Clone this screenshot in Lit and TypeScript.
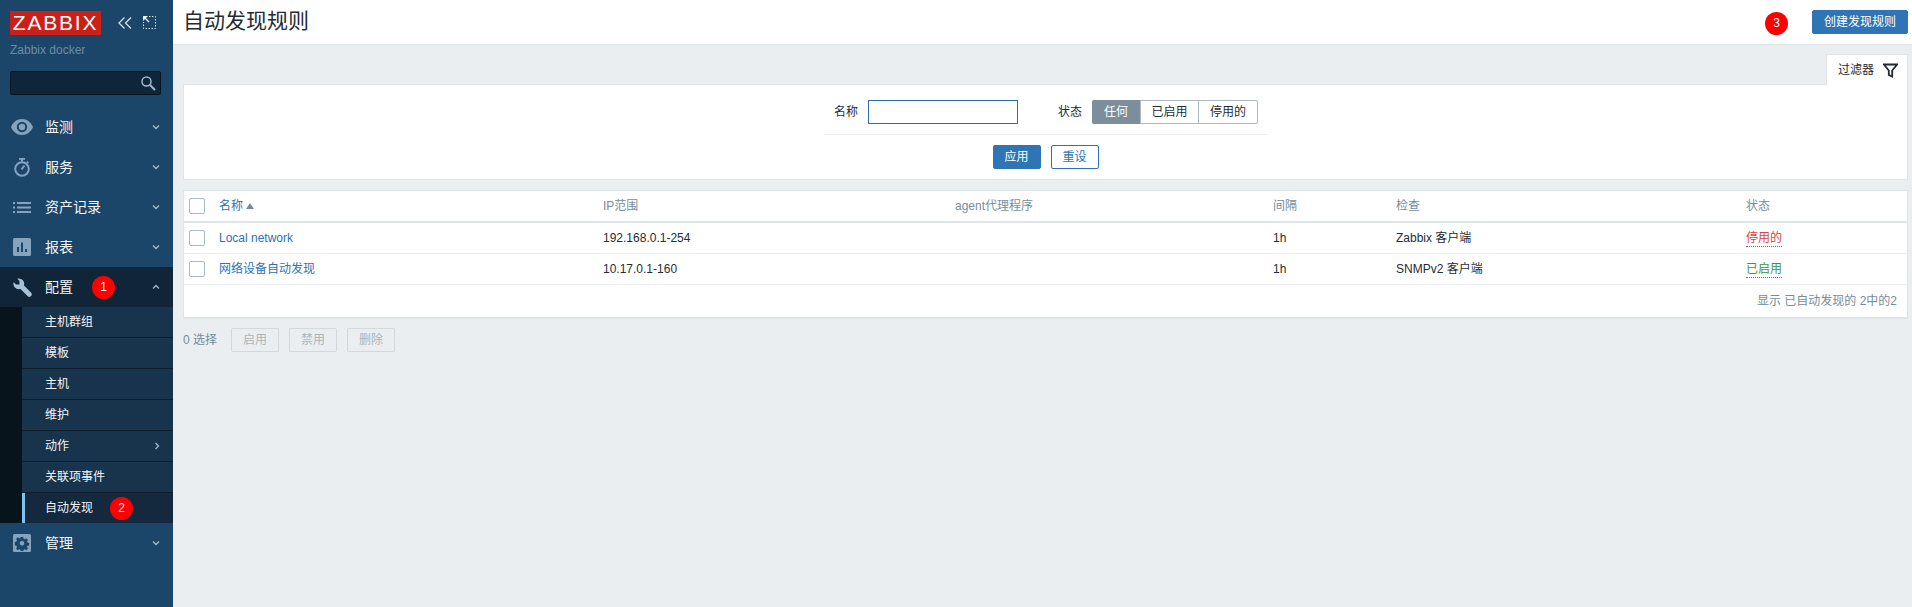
import { LitElement, html, css, svg } from 'lit';
import { customElement } from 'lit/decorators.js';

const chevronDown = svg`<polyline points="1,1.5 4,4.5 7,1.5" fill="none" stroke="currentColor" stroke-width="1.3" />`;
const chevronUp = svg`<polyline points="1,4.5 4,1.5 7,4.5" fill="none" stroke="currentColor" stroke-width="1.3" />`;

const menuIcons = {
  eye: svg`<svg width="22" height="16" viewBox="0 0 22 16"><path fill-rule="evenodd" fill="#86a3bd" d="M11 0C6 0 2 3.500 0 8c2 4.500 6 8 11 8s9-3.500 11-8c-2-4.500-6-8-11-8zm0 2.800a5.200 5.200 0 1 1 0 10.400 5.200 5.200 0 0 1 0-10.400z"/><circle cx="11" cy="8" r="3.200" fill="#86a3bd"/></svg>`,
  timer: svg`<svg width="16" height="19" viewBox="0 0 16 19"><rect x="5" y="0" width="6" height="1.800" fill="#86a3bd"/><rect x="7" y="1" width="2" height="2.500" fill="#86a3bd"/><circle cx="8" cy="11" r="6.800" fill="none" stroke="#86a3bd" stroke-width="2"/><path d="M7.500 11.500l3-4" stroke="#86a3bd" stroke-width="2"/><path d="M12.800 3.500l1.700 1.700" stroke="#86a3bd" stroke-width="1.600"/></svg>`,
  list: svg`<svg width="18" height="11" viewBox="0 0 18 11" fill="#86a3bd"><rect x="0" y="0" width="2" height="2"/><rect x="4" y="0" width="14" height="2"/><rect x="0" y="4.500" width="2" height="2"/><rect x="4" y="4.500" width="14" height="2"/><rect x="0" y="9" width="2" height="2"/><rect x="4" y="9" width="14" height="2"/></svg>`,
  bars: svg`<svg width="18" height="18" viewBox="0 0 18 18"><rect width="18" height="18" rx="1.500" fill="#86a3bd"/><rect x="4" y="9" width="2" height="5" fill="#1c4669"/><rect x="8" y="4.500" width="2" height="9.500" fill="#1c4669"/><rect x="12" y="11" width="2" height="3" fill="#1c4669"/></svg>`,
  wrench: svg`<svg width="19" height="19" viewBox="0 0 19 19"><g fill="#a9c1d6"><circle cx="5.800" cy="5.800" r="5.400"/><path d="M4 7.500L7.500 4 18 14.500a2.400 2.400 0 0 1-3.500 3.500z"/></g><path fill="#102537" d="M-1 2.500L2.500 -1 6.500 3 6.500 6.500 3 6.500z"/></svg>`,
  gear: svg`<svg width="18" height="18" viewBox="0 0 18 18"><rect width="18" height="18" rx="1.500" fill="#86a3bd"/><path fill="#1c4669" fill-rule="evenodd" d="M7.700 3h2.600l.3 1.700 1.200.5 1.400-1 1.800 1.800-1 1.400.5 1.200 1.700.3v2.600l-1.700.3-.5 1.200 1 1.400-1.800 1.800-1.400-1-1.200.5-.3 1.300H7.700l-.3-1.300-1.200-.5-1.400 1-1.800-1.800 1-1.400-.5-1.200-1.700-.3V7.900l1.700-.3.500-1.200-1-1.400 1.800-1.800 1.400 1 1.200-.5zM9 7a2.300 2.300 0 1 0 0 4.600A2.300 2.300 0 0 0 9 7z"/></svg>`,
};

const mainMenu = [
  { label: '监测', icon: menuIcons.eye },
  { label: '服务', icon: menuIcons.timer },
  { label: '资产记录', icon: menuIcons.list },
  { label: '报表', icon: menuIcons.bars },
];

const subMenu = ['主机群组', '模板', '主机', '维护', '动作', '关联项事件', '自动发现'];

const rows = [
  { name: 'Local network', range: '192.168.0.1-254', interval: '1h', check: 'Zabbix 客户端', status: '停用的', cls: 'off' },
  { name: '网络设备自动发现', range: '10.17.0.1-160', interval: '1h', check: 'SNMPv2 客户端', status: '已启用', cls: 'on' },
];

@customElement('app-root')
export class AppRoot extends LitElement {
  static styles = css`
    :host {
      display: flex;
      height: 607px;
      overflow: hidden;
      background: #ebeef0;
      color: #1f2c33;
      font: 12px/14px "Liberation Sans", "Noto Sans CJK SC", sans-serif;
    }

    /* sidebar */
    .side {
      width: 173px;
      flex: none;
      background: #1c4669;
      display: flex;
      flex-direction: column;
    }
    .brand {
      display: flex;
      align-items: flex-start;
      padding: 11px 0 0 10px;
    }
    .logo {
      width: 91px;
      height: 24px;
      background: #c9201a;
      color: #fff;
      font-size: 21px;
      line-height: 24px;
      text-align: center;
      letter-spacing: 1.8px;
    }
    .brand-tools {
      display: flex;
      align-items: center;
      gap: 11px;
      margin: 5px 0 0 17px;
    }
    .server {
      color: #6c8ba6;
      margin: 8px 0 0 10px;
      height: 14px;
    }
    .search {
      margin: 14px 0 12px 10px;
      width: 151px;
      height: 24px;
      box-sizing: border-box;
      background: #0f2638;
      border: 1px solid #07141f;
      border-radius: 2px;
      display: flex;
      align-items: center;
      justify-content: flex-end;
      padding-right: 4px;
    }
    .item {
      height: 40px;
      display: flex;
      align-items: center;
      color: #f2f5f8;
      font-size: 14px;
      position: relative;
      flex: none;
    }
    .item .ico {
      width: 45px;
      flex: none;
      display: flex;
      justify-content: center;
      padding-right: 1px;
      box-sizing: border-box;
    }
    .item .chev {
      margin-left: auto;
      margin-right: 13px;
      color: #a4b8c9;
      display: flex;
    }
    .item.open {
      background: #102537;
    }
    .badge {
      width: 23px;
      height: 23px;
      border-radius: 50%;
      background: #ff0000;
      color: #fff;
      font-size: 12px;
      line-height: 23px;
      text-align: center;
      flex: none;
    }
    .item .badge {
      margin-left: 19px;
    }
    .sub {
      display: flex;
      background: #07141c;
      padding-left: 22px;
    }
    .sub ul {
      flex: 1;
      list-style: none;
      margin: 0;
      padding: 0;
    }
    .sub li {
      height: 31px;
      box-sizing: border-box;
      border-bottom: 1px solid #0d1d2b;
      background: #18344c;
      color: #f2f5f8;
      display: flex;
      align-items: center;
      padding-left: 23px;
    }
    .sub li:last-child {
      height: 30px;
      border-bottom: 0;
      border-left: 3px solid #7fc2f2;
      padding-left: 20px;
      background: #14293d;
    }
    .sub li .badge {
      margin-left: 17px;
    }
    .sub li .chev {
      margin-left: auto;
      margin-right: 13px;
      color: #a4b8c9;
      display: flex;
    }

    /* main */
    .main {
      flex: 1;
      min-width: 0;
      display: flex;
      flex-direction: column;
    }
    .head {
      height: 45px;
      box-sizing: border-box;
      background: #fff;
      border-bottom: 1px solid #dfe4e7;
      display: flex;
      align-items: center;
      padding: 0 4px 0 10px;
      flex: none;
    }
    h1 {
      margin: 0;
      font-size: 21px;
      line-height: 24px;
      font-weight: 400;
      color: #1f2c33;
      margin-top: -3px;
    }
    .head .badge {
      margin: 2px 24px 0 auto;
    }
    .btn {
      height: 24px;
      box-sizing: border-box;
      border: 1px solid #2b72b8;
      border-radius: 2px;
      background: #fff;
      color: #2b72b8;
      font: inherit;
      padding: 0;
      display: flex;
      align-items: center;
      justify-content: center;
      width: 48px;
    }
    .btn.primary {
      background: #2f74b5;
      color: #fff;
      border-color: #2f74b5;
    }
    .btn.create {
      width: 96px;
    }
    .btn.muted {
      background: #ebeef0;
      border-color: #d3d8db;
      color: #acb4b9;
    }
    .content {
      padding: 9px 4px 0 10px;
      display: flex;
      flex-direction: column;
    }
    .tabs {
      display: flex;
      justify-content: flex-end;
      height: 31px;
      margin-bottom: -1px;
      position: relative;
    }
    .tab {
      width: 82px;
      box-sizing: border-box;
      background: #fff;
      border: 1px solid #dfe4e7;
      border-bottom: 0;
      display: flex;
      align-items: center;
      padding-left: 11px;
      gap: 9px;
      color: #1f2c33;
      position: relative;
      z-index: 1;
    }
    .filter {
      height: 96px;
      box-sizing: border-box;
      background: #fff;
      border: 1px solid #dfe4e7;
      display: flex;
      flex-direction: column;
      align-items: center;
    }
    .filter-row {
      width: 443px;
      box-sizing: border-box;
      display: flex;
      align-items: center;
      padding: 15px 9px 10px 10px;
      border-bottom: 1px solid #ebeef0;
      white-space: nowrap;
    }
    .input {
      width: 150px;
      height: 24px;
      box-sizing: border-box;
      border: 1px solid #2b6ea8;
      margin: 0 40px 0 10px;
      background: #fff;
      flex: none;
    }
    .segs {
      display: flex;
      height: 24px;
      margin-left: 10px;
      box-sizing: border-box;
      border: 1px solid #acbbc3;
      border-radius: 2px;
    }
    .segs span {
      display: flex;
      align-items: center;
      justify-content: center;
      border-left: 1px solid #acbbc3;
      box-sizing: border-box;
      width: 58px;
    }
    .segs span:first-child {
      width: 48px;
      border-left: 0;
      background: #7b8e9a;
      color: #fff;
      margin: -1px 0 -1px -1px;
      border-radius: 2px 0 0 2px;
    }
    .segs span:last-child {
      width: 59px;
    }
    .filter-actions {
      display: flex;
      gap: 10px;
      margin-top: 10px;
    }
    .table {
      margin-top: 10px;
      background: #fff;
      border: 1px solid #dfe4e7;
      border-bottom-width: 2px;
      height: 129px;
      box-sizing: border-box;
    }
    .tr {
      display: grid;
      grid-template-columns: 35px 384px 352px 318px 123px 350px 1fr;
      align-items: center;
      height: 31px;
      box-sizing: border-box;
      border-bottom: 1px solid #ebeef0;
    }
    .tr.th {
      height: 32px;
      border-bottom: 2px solid #dfe4e7;
      color: #768d99;
    }
    .tr.th .sort {
      color: #2b72b8;
      display: flex;
      align-items: center;
      gap: 3px;
    }
    .check {
      width: 16px;
      height: 16px;
      box-sizing: border-box;
      border: 1px solid #acbbc3;
      border-radius: 2px;
      margin-left: 5px;
      background: #fff;
    }
    a {
      color: #2b72b8;
    }
    .status {
      justify-self: start;
      border-bottom: 1px dotted currentColor;
      line-height: 15px;
      padding-top: 1px;
    }
    .off { color: #d64541; }
    .on { color: #3a9a36; }
    .count {
      text-align: right;
      color: #768d99;
      padding: 9px 10px 0 0;
    }
    .actions {
      display: flex;
      align-items: center;
      gap: 10px;
      margin-top: 9px;
      color: #768d99;
    }
    .selected {
      width: 38px;
    }
  `;

  private chevDown() {
    return html`<span class="chev"><svg width="8" height="6" viewBox="0 0 8 6">${chevronDown}</svg></span>`;
  }

  render() {
    return html`
      <nav class="side">
        <div class="brand">
          <div class="logo">ZABBIX</div>
          <div class="brand-tools">
            <svg width="14" height="12" viewBox="0 0 14 12" fill="none" stroke="#d5dfe8" stroke-width="1.300">
              <polyline points="6.500,0.500 1,6 6.500,11.500" />
              <polyline points="13,0.500 7.500,6 13,11.500" />
            </svg>
            <svg width="13" height="13" viewBox="0 0 13 13" fill="none">
              <path d="M6 .5h6.500v12H.5V6" stroke="#d5dfe8" stroke-dasharray="1.500 1.500" />
              <path d="M0 0h5L0 5z" fill="#eef3f7" />
              <path d="M2 2l4 4" stroke="#eef3f7" stroke-width="1.300" />
            </svg>
          </div>
        </div>
        <div class="server">Zabbix docker</div>
        <div class="search">
          <svg width="16" height="16" viewBox="0 0 16 16" fill="none" stroke="#a4b8c9">
            <circle cx="6.500" cy="6.500" r="4.500" stroke-width="1.500" />
            <path d="M10 10l5 5" stroke-width="2" />
          </svg>
        </div>
        ${mainMenu.map(
          (m) => html`<div class="item">
            <span class="ico">${m.icon}</span>${m.label}${this.chevDown()}
          </div>`
        )}
        <div class="item open">
          <span class="ico">${menuIcons.wrench}</span>配置
          <span class="badge">1</span>
          <span class="chev"><svg width="8" height="6" viewBox="0 0 8 6">${chevronUp}</svg></span>
        </div>
        <div class="sub">
          <ul>
            ${subMenu.map(
              (s) => html`<li>
                ${s}
                ${s === '动作'
                  ? html`<span class="chev"><svg width="6" height="8" viewBox="0 0 6 8"><polyline points="1.500,1 4.500,4 1.500,7" fill="none" stroke="currentColor" stroke-width="1.300" /></svg></span>`
                  : ''}
                ${s === '自动发现' ? html`<span class="badge">2</span>` : ''}
              </li>`
            )}
          </ul>
        </div>
        <div class="item">
          <span class="ico">${menuIcons.gear}</span>管理${this.chevDown()}
        </div>
      </nav>
      <div class="main">
        <header class="head">
          <h1>自动发现规则</h1>
          <span class="badge">3</span>
          <button class="btn primary create">创建发现规则</button>
        </header>
        <div class="content">
          <div class="tabs">
            <div class="tab">
              过滤器
              <svg width="15" height="15" viewBox="0 0 15 15" fill="none" stroke="#1f2c33" stroke-width="1.800">
                <path d="M1 1.500h13L9.200 7.500v6l-3.400-1.500V7.500z" />
              </svg>
            </div>
          </div>
          <section class="filter">
            <div class="filter-row">
              <span>名称</span>
              <div class="input"></div>
              <span>状态</span>
              <div class="segs"><span>任何</span><span>已启用</span><span>停用的</span></div>
            </div>
            <div class="filter-actions">
              <button class="btn primary">应用</button>
              <button class="btn">重设</button>
            </div>
          </section>
          <section class="table">
            <div class="tr th">
              <div class="check"></div>
              <div class="sort">名称<svg width="8" height="6" viewBox="0 0 8 6"><path d="M4 0l4 6H0z" fill="#768d99" /></svg></div>
              <div>IP范围</div>
              <div>agent代理程序</div>
              <div>间隔</div>
              <div>检查</div>
              <div>状态</div>
            </div>
            ${rows.map(
              (r) => html`<div class="tr">
                <div class="check"></div>
                <a>${r.name}</a>
                <div>${r.range}</div>
                <div></div>
                <div>${r.interval}</div>
                <div>${r.check}</div>
                <div class="status ${r.cls}">${r.status}</div>
              </div>`
            )}
            <div class="count">显示 已自动发现的 2中的2</div>
          </section>
          <div class="actions">
            <span class="selected">0 选择</span>
            <button class="btn muted">启用</button>
            <button class="btn muted">禁用</button>
            <button class="btn muted">删除</button>
          </div>
        </div>
      </div>
    `;
  }
}

declare global {
  interface HTMLElementTagNameMap {
    'app-root': AppRoot;
  }
}
